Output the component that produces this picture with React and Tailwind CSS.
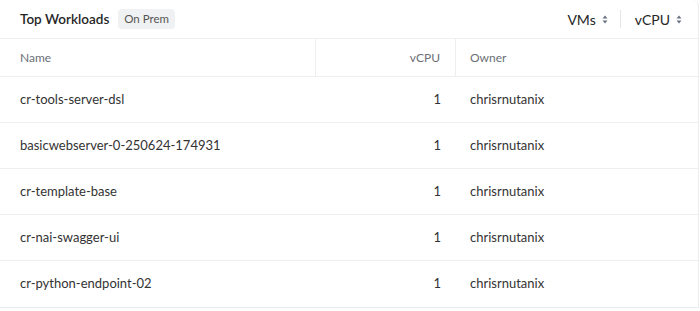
import React from 'react';

const rows = [
  { name: 'cr-tools-server-dsl', vcpu: 1, owner: 'chrisrnutanix' },
  { name: 'basicwebserver-0-250624-174931', vcpu: 1, owner: 'chrisrnutanix' },
  { name: 'cr-template-base', vcpu: 1, owner: 'chrisrnutanix' },
  { name: 'cr-nai-swagger-ui', vcpu: 1, owner: 'chrisrnutanix' },
  { name: 'cr-python-endpoint-02', vcpu: 1, owner: 'chrisrnutanix' },
];

function SortIcon() {
  return (
    <svg width="6" height="9" viewBox="0 0 6 9" className="ml-[6px] text-gray-500">
      <path d="M3 0.5 L5.5 3.5 H0.5 Z" fill="currentColor" />
      <path d="M3 8.5 L5.5 5.5 H0.5 Z" fill="currentColor" />
    </svg>
  );
}

export default function App() {
  return (
    <div className="w-[700px] h-[311px] bg-white overflow-hidden" style={{ fontFamily: 'Lato, "Open Sans", sans-serif' }}>
      <div className="w-[699px] bg-white border-r border-b border-[#ececec] rounded-tr-md">
        {/* Header */}
        <div className="h-[39px] flex items-center justify-between pl-5 pr-4 border-b border-[#efefef]">
          <div className="flex items-center">
            <h3 className="text-[13.5px] font-semibold text-[#262626]">Top Workloads</h3>
            <span className="ml-[9px] px-[6px] py-[2px] rounded bg-[#f0f1f3] text-[11.5px] text-[#555] leading-[16px]">On Prem</span>
          </div>
          <div className="flex items-center text-[14px] text-[#262626]">
            <button className="flex items-center pr-3">VMs<SortIcon /></button>
            <div className="w-px h-[18px] bg-[#e6e6e6]" />
            <button className="flex items-center pl-[14px]">vCPU<SortIcon /></button>
          </div>
        </div>

        {/* Table head */}
        <div className="grid grid-cols-[316px_140px_1fr] h-[38px] border-b border-[#efefef] text-[12px] text-[#6b6f76]">
          <div className="flex items-center pl-5 border-r border-[#efefef]">Name</div>
          <div className="flex items-center justify-end pr-[15px] border-r border-[#efefef]">vCPU</div>
          <div className="flex items-center pl-[14px]">Owner</div>
        </div>

        {rows.map((r) => (
          <div key={r.name} className="grid grid-cols-[316px_140px_1fr] h-[46px] border-b border-[#efefef] last:border-b-0 text-[13px] text-[#333]">
            <div className="flex items-center pl-5">{r.name}</div>
            <div className="flex items-center justify-end pr-[15px]">{r.vcpu}</div>
            <div className="flex items-center pl-[14px]">{r.owner}</div>
          </div>
        ))}
      </div>
    </div>
  );
}
